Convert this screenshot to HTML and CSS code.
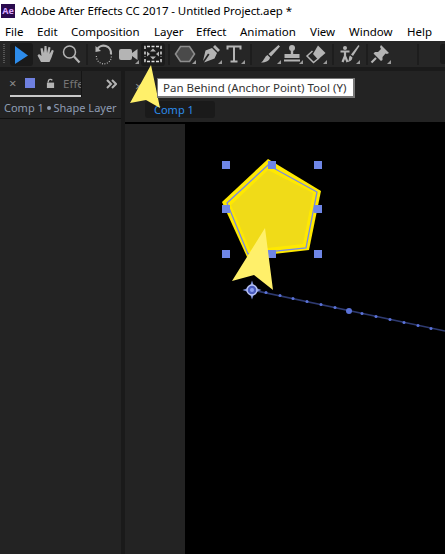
FILE: index.html
```html
<!DOCTYPE html>
<html lang="en">
<head>
<meta charset="utf-8">
<title>Adobe After Effects CC 2017</title>
<link rel="stylesheet" href="styles.css">
</head>
<body>
<div class="app">
  <header class="titlebar">
    <span class="ae-logo">Ae</span>
    <span class="title">Adobe After Effects CC 2017 - Untitled Project.aep *</span>
  </header>
  <nav class="menubar">
    <span class="m-file">File</span><span class="m-edit">Edit</span><span class="m-comp">Composition</span><span class="m-layer">Layer</span><span class="m-effect">Effect</span><span class="m-anim">Animation</span><span class="m-view">View</span><span class="m-window">Window</span><span class="m-help">Help</span>
  </nav>
  <div class="toolbar">
    <span class="grip"></span>
    <span class="tool active"><svg viewBox="0 0 22 22"><path class="blue" d="M5 3 L18 12.500 L5 21Z"/></svg></span>
    <span class="tool"><svg viewBox="0 0 22 22"><path class="fill" d="M6 19 L2.500 12.500 L4 11 L6.500 13 L5.500 5.500 L7.500 5 L9 10 L9.500 3 L11.500 3 L12 10 L13.500 3.800 L15.500 4.500 L14.500 11 L17 6.800 L18.800 7.800 L16.500 14.500 L14.500 19Z"/></svg></span>
    <span class="tool t-zoom"><svg viewBox="0 0 22 22"><circle class="line" cx="9.500" cy="9" r="6"/><path class="line thick" d="M14 13.500 L19.500 19.500"/></svg></span>
    <span class="sep sep-zoom"></span>
    <span class="tool"><svg viewBox="0 0 22 22"><path class="line thick" d="M4 6.500 A7.500 7.500 0 0 1 18 11"/><path class="fill" d="M2.500 3 L8 8 L2.500 9Z"/><path class="line dots" d="M18 11 A7.500 7.500 0 1 1 3.500 12"/></svg></span>
    <span class="tool corner"><svg viewBox="0 0 22 22"><rect class="fill" x="2" y="6" width="13" height="11" rx="2"/><path class="fill" d="M15 10 L20.500 6 V17 L15 13Z"/></svg></span>
    <span class="tool boxed"><svg viewBox="0 0 22 22"><path class="line dash" d="M3 6 V3.500 H19 V6 M3 16 V18.500 H19 V16 M3 8.500 V13.500 M19 8.500 V13.500"/><path class="fill" d="M11 5.500 L14 8.500 H8Z M11 16.500 L8 13.500 H14Z M5 8.500 L8 11 L5 13.500Z M17 8.500 L14 11 L17 13.500Z"/></svg></span>
    <span class="sep sep-pan"></span>
    <span class="tool corner"><svg viewBox="0 0 22 22"><path class="hex" d="M6.500 3.500 H15.500 L20.500 11 L15.500 18.500 H6.500 L1.500 11Z"/></svg></span>
    <span class="tool corner t-pen"><svg viewBox="0 0 22 22"><path class="fill" d="M15 2 L20 7 L18 9 L13 4Z M12 5 L17 10 L14.500 15.500 L4 19.500 L9.500 11.500 L8 10.500 L3 18 L5.500 7.500Z"/></svg></span>
    <span class="tool corner t-type"><svg viewBox="0 0 22 22"><path class="type" d="M4.500 6.500 V3.500 H17.500 V6.500 M11 3.500 V18.500 M7.500 18.500 H14.500"/></svg></span>
    <span class="sep"></span>
    <span class="tool corner t-brush"><svg viewBox="0 0 22 22"><path class="fill" d="M19.500 2 L21 3.500 L12 13.500 L9.500 11Z M8.500 12 L11 14.500 C10.500 18 7 19.500 2 19.500 C5 18 5.500 13.500 8.500 12Z"/></svg></span>
    <span class="tool corner"><svg viewBox="0 0 22 22"><circle class="fill" cx="11" cy="5" r="3"/><path class="fill" d="M9.800 7 H12.200 V11 H18.500 V15 H3.500 V11 H9.800Z"/><rect class="fill" x="3" y="16.500" width="16" height="2"/></svg></span>
    <span class="tool corner"><svg viewBox="0 0 22 22"><path class="fill" d="M13 2.500 L20.500 10 L13 16.500 L8 11Z"/><path class="line" d="M7.500 8 L2 13 L8.500 19.500 L14 15"/></svg></span>
    <span class="sep"></span>
    <span class="tool corner t-puppet"><svg viewBox="0 0 22 22"><circle class="fill" cx="7" cy="5" r="2"/><path class="line thick" d="M2.500 8.500 H11.500 M7 8 V13 M7 13 L4.500 19 M7 13 L9.500 19"/><path class="fill" d="M20.500 2 L21.500 3 L15 13 L13 11.500Z M12 12.500 L14.500 14.500 C14 17.500 12 18.500 9.500 19 C11.500 17.500 10.500 14 12 12.500Z"/></svg></span>
    <span class="sep"></span>
    <span class="tool corner t-pin"><svg viewBox="0 0 22 22"><path class="fill" d="M12 2 L20 10 L18 11 L16.500 10.500 L13.500 14 L13.500 17 L12 18 L4.500 10.500 L6 9 L9 9 L12 6 L11 4Z"/><path class="line thick" d="M7 15 L2.500 19.500"/></svg></span>
    <span class="sep sep-far"></span>
    <span class="edge-btn"></span>
  </div>
  <div class="workspace">
    <section class="panel-left">
      <div class="left-tabs">
        <div class="tab-strip">
          <span class="close">×</span>
          <span class="swatch"></span>
          <svg class="lock" viewBox="0 0 10 12"><path class="fill" d="M1 5 H9 V11 H1Z"/><path class="line" d="M2.500 5 V3.500 A2.500 2.500 0 0 1 7 2.500"/></svg>
          <span class="tab-name">Effects</span>
        </div>
        <svg class="chevrons" viewBox="0 0 11 10"><path class="chev" d="M1 1 L5 5 L1 9 M6 1 L10 5 L6 9"/></svg>
      </div>
      <div class="crumb">Comp 1 <span class="dot"></span> Shape Layer</div>
    </section>
    <section class="panel-right">
      <div class="comp-head">
        <span class="close close-comp">×</span>
        <span class="comp-chip">Comp 1</span>
      </div>
      <div class="comp-body">
        <div class="pasteboard"></div>
        <div class="viewer">
          <svg class="stage" viewBox="185 124 260 430">
            <path class="path-line" d="M252 290 L445 331"/>
            <g class="path-dots">
              <circle cx="266" cy="292.500" r="1.500"/><circle cx="280" cy="295.500" r="1.500"/><circle cx="293" cy="298.500" r="1.500"/><circle cx="307" cy="301.500" r="1.500"/><circle cx="321" cy="304.500" r="1.500"/><circle cx="335" cy="307.500" r="1.500"/><circle cx="349" cy="311" r="3"/><circle cx="362" cy="313.500" r="1.500"/><circle cx="376" cy="316.500" r="1.500"/><circle cx="390" cy="319.500" r="1.500"/><circle cx="404" cy="322.500" r="1.500"/><circle cx="418" cy="325.500" r="1.500"/><circle cx="431" cy="328.500" r="1.500"/>
            </g>
            <path class="penta-outer" d="M268 159 L321 191 L309 250 L247 257 L222 202Z"/>
            <path class="penta-fill" d="M268 170 L313 193 L303 244 L250 250 L231 205Z"/>
            <path class="penta-stroke" d="M268 165 L317 192 L306 248 L248 254 L227 203Z"/>
            <g class="handles">
              <rect x="222" y="161" width="8" height="8"/><rect x="268" y="161" width="8" height="8"/><rect x="314" y="161" width="8" height="8"/>
              <rect x="222" y="205" width="8" height="8"/><rect x="314" y="205" width="8" height="8"/>
              <rect x="222" y="250" width="8" height="8"/><rect x="268" y="250" width="8" height="8"/><rect x="314" y="250" width="8" height="8"/>
            </g>
            <path class="anchor-star" d="M252 280.500 L254.500 287.500 L261.500 290 L254.500 292.500 L252 299.500 L249.500 292.500 L242.500 290 L249.500 287.500Z"/>
            <circle class="anchor-ring" cx="252" cy="290" r="5"/>
            <circle class="anchor-core" cx="252" cy="290" r="2"/>
          </svg>
        </div>
      </div>
    </section>
  </div>
  <svg class="callouts" viewBox="0 0 445 554">
    <path class="callout" d="M151 65 L130 103 L146 100 L160 108Z"/>
    <path class="callout" d="M265 228 L232 281 L254 275 L273 290Z"/>
  </svg>
  <div class="tooltip">Pan Behind (Anchor Point) Tool (Y)</div>
</div>
</body>
</html>
```

FILE: styles.css
```css
* { box-sizing: border-box; }
html, body { margin: 0; padding: 0; background: #232323; }
.app {
  position: relative;
  width: 445px;
  height: 554px;
  overflow: hidden;
  display: flex;
  flex-direction: column;
  font-family: "Noto Sans", "Open Sans", sans-serif;
}

/* window chrome */
.titlebar {
  height: 21px;
  background: #fff;
  display: flex;
  align-items: center;
  color: #000;
  font-size: 11.500px;
  letter-spacing: -0.100px;
  padding-left: 1px;
}
.ae-logo {
  width: 14px;
  height: 14px;
  background: #2a0a4e;
  color: #d9a7ff;
  font-size: 9px;
  font-weight: 700;
  line-height: 14px;
  text-align: center;
  margin-right: 6px;
  letter-spacing: 0;
}
.menubar {
  height: 20px;
  padding-top: 2px;
  background: #fff;
  color: #000;
  font-size: 11.500px;
  display: flex;
  align-items: center;
  line-height: 18px;
  white-space: nowrap;
}
.m-file { margin-left: 5px; width: 32px; }
.m-edit { width: 34px; }
.m-comp { width: 83px; }
.m-layer { width: 42px; }
.m-effect { width: 44px; }
.m-anim { width: 70px; }
.m-view { width: 39px; }
.m-window { width: 58px; }

/* tools */
.toolbar {
  height: 26px;
  background: #262626;
  display: flex;
  align-items: center;
  padding-left: 3px;
  flex: none;
}
.grip {
  width: 3px;
  height: 20px;
  margin-right: 5px;
  background: repeating-linear-gradient(#555 0 1px, transparent 1px 2px);
}
.tool {
  position: relative;
  width: 24px;
  height: 23px;
  display: flex;
  align-items: center;
  justify-content: center;
  flex: none;
}
.tool svg { width: 22px; height: 22px; }
.tool.active { background: #1a1a1a; border-radius: 3px; width: 23px; margin-right: 1px; }
.tool.boxed { background: #1c1c1c; border-radius: 3px; margin-left: 1px; }
.tool.corner::after {
  content: "";
  position: absolute;
  right: 1px;
  bottom: 2px;
  border: 2px solid transparent;
  border-right-color: #9a9a9a;
  border-bottom-color: #9a9a9a;
}
.sep { width: 2px; height: 21px; background: #1d1d1d; margin: 0 4px; flex: none; }
.t-zoom { margin-left: 1px; }
.sep-zoom { margin: 0 4px 0 3px; }
.sep-pan { margin: 0 3px 0 3px; }
.t-pen { margin-left: 2px; }
.t-type { margin-left: -1px; }
.t-brush { margin-left: 2px; margin-right: -2px; }
.t-puppet { margin-left: -1px; margin-right: 1px; }
.t-pin { margin-left: -4px; }
.sep-far { margin-left: 25px; }
.edge-btn { width: 8px; height: 20px; margin-left: 17px; background: #1a1a1a; border-radius: 3px 0 0 3px; }

.fill { fill: #b4b4b4; }
.blue { fill: #2d8ceb; }
.line { fill: none; stroke: #b4b4b4; stroke-width: 1.500; }
.thick { stroke-width: 2.200; }
.dots { stroke-dasharray: 1 1.500; stroke-width: 1.200; }
.dash { stroke: #ddd; stroke-width: 1.500; stroke-dasharray: 3 1.500; }
.hex { fill: #4a4a4a; stroke: #8d8d8d; stroke-width: 1.600; }
.type { fill: none; stroke: #b4b4b4; stroke-width: 2; }

/* panels */
.workspace {
  flex: 1;
  min-height: 0;
  display: flex;
  background: #1a1a1a;
  padding-top: 4px;
  gap: 4px;
}
.panel-left { width: 121px; background: #232323; flex: none; }
.left-tabs { height: 26px; display: flex; align-items: stretch; }
.tab-strip {
  width: 82px;
  padding: 0 0 2px 9px;
  display: flex;
  align-items: center;
  border-right: 1px solid #151515;
  position: relative;
  overflow: hidden;
  white-space: nowrap;
}
.tab-strip::after {
  content: "";
  position: absolute;
  left: 10px;
  right: 0;
  bottom: 0;
  height: 2px;
  background: #c9c9c9;
}
.close { color: #8c8c8c; font-size: 13px; line-height: 1; width: 16px; flex: none; }
.swatch { width: 10px; height: 10px; background: #6f80e0; margin-right: 11px; flex: none; }
.lock { width: 9px; height: 11px; margin-right: 8px; flex: none; }
.tab-name { color: #757575; font-size: 11.500px; flex: none; }
.chevrons { width: 11px; height: 10px; margin: 8px 0 0 24px; flex: none; }
.chev { fill: none; stroke: #b4b4b4; stroke-width: 2; }
.crumb {
  height: 22px;
  line-height: 22px;
  font-size: 11px;
  color: #8f9db3;
  padding-left: 4px;
  border-bottom: 1px solid #111;
  white-space: nowrap;
}
.dot { display: inline-block; width: 4px; height: 4px; border-radius: 50%; background: #8f9db3; vertical-align: 2px; }

.panel-right { flex: 1; min-width: 0; background: #232323; display: flex; flex-direction: column; }
.comp-head { height: 53px; display: flex; align-items: flex-start; border-bottom: 2px solid #000; position: relative; }
.close-comp { position: absolute; left: 10px; top: 9px; }
.comp-chip {
  margin: 30px 0 0 20px;
  width: 70px;
  height: 17px;
  background: #1a1a1a;
  border-radius: 3px;
  color: #2d8ceb;
  font-size: 11px;
  line-height: 17px;
  padding-left: 9px;
}
.comp-body { flex: 1; min-height: 0; display: flex; }
.pasteboard { width: 60px; flex: none; }
.viewer { flex: 1; background: #000; min-width: 0; }
.stage { display: block; width: 100%; height: 100%; }

.path-line { fill: none; stroke: #2e3a70; stroke-width: 1.600; }
.path-dots circle { fill: #5a72d8; }
.penta-outer { fill: #ffe900; }
.penta-fill { fill: #f0db18; }
.penta-stroke { fill: none; stroke: #7a8ae0; stroke-width: 1.300; }
.handles rect { fill: #6f86e6; }
.anchor-star { fill: #7f90d8; }
.anchor-ring { fill: #4a5cc0; stroke: #b9c4f5; stroke-width: 1.400; }
.anchor-core { fill: #8da0f0; }

/* overlays */
.tooltip {
  position: absolute;
  left: 157px;
  top: 78px;
  width: 198px;
  height: 20px;
  background: #fff;
  border: 1px solid #777;
  border-right-width: 2px;
  border-bottom-width: 2px;
  color: #333;
  font-size: 11.500px;
  line-height: 17px;
  padding-left: 5px;
  white-space: nowrap;
}
.callouts { position: absolute; inset: 0; width: 445px; height: 554px; pointer-events: none; }
.callout { fill: #fff06a; }
```
